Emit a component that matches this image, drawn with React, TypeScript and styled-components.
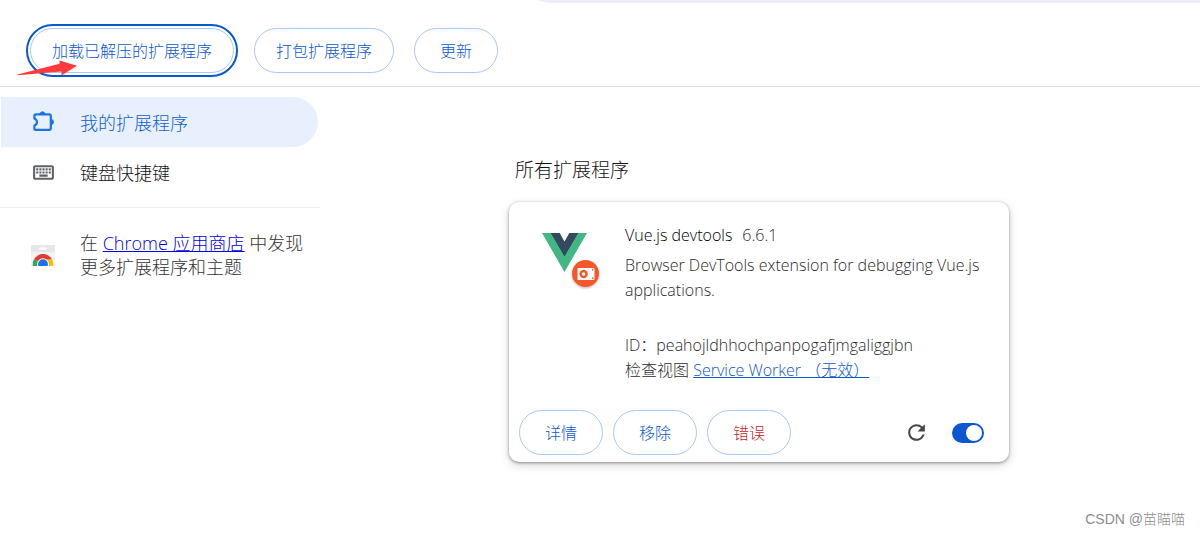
import React from 'react';
import styled, { createGlobalStyle, css } from 'styled-components';
import { MdOutlineKeyboard, MdRefresh } from 'react-icons/md';

const GlobalStyle = createGlobalStyle`
  *, *::before, *::after { box-sizing: border-box; }
  body {
    margin: 0;
    background: #fff;
    color: #111214;
    font-family: "Open Sans", "Noto Sans CJK SC", sans-serif;
    font-weight: 300;
  }
  h1, h2, p { margin: 0; font-weight: inherit; }
  button, input { font: inherit; }
`;

const Page = styled.div`
  display: flex;
  flex-direction: column;
  min-height: 100vh;
`;

const TopBar = styled.header`
  display: flex;
  align-items: flex-end;
  height: 3px;
  padding-left: 522px;
  overflow: hidden;
`;

const SearchField = styled.input`
  flex: 1;
  min-width: 0;
  height: 56px;
  border: 0;
  border-radius: 28px 0 0 28px;
  background: #e9eef8;
`;

const Toolbar = styled.div`
  display: flex;
  gap: 20px;
  padding: 25px 30px 13px;
  border-bottom: 1px solid #dadce0;
`;

const PillButton = styled.button<{ $tone?: string; $focused?: boolean }>`
  position: relative;
  min-width: 84px;
  height: 45px;
  padding: 0 21px;
  border: 1px solid #a8c7fa;
  border-radius: 23px;
  background: #fff;
  color: ${({ $tone }) => $tone ?? '#0b57d0'};
  font-size: 16px;
  line-height: 24px;
  white-space: nowrap;
  cursor: pointer;
  ${({ $focused }) =>
    $focused &&
    css`
      outline: 2px solid #0b57d0;
      outline-offset: 2px;
    `}
`;

const Pointer = styled.svg`
  position: absolute;
  left: -16px;
  top: 28px;
  width: 64px;
  height: 20px;
  pointer-events: none;
`;

const Body = styled.div`
  display: flex;
  align-items: flex-start;
`;

const Sidebar = styled.aside`
  flex: 0 0 320px;
  padding-top: 10px;
  font-size: 18px;
`;

const NavItem = styled.a<{ $active?: boolean }>`
  display: flex;
  align-items: center;
  gap: 24px;
  height: 50px;
  margin: 0 2px 0 1px;
  padding-left: 30px;
  border-radius: 0 25px 25px 0;
  background: ${({ $active }) => ($active ? '#e8f0fe' : 'transparent')};
  color: ${({ $active }) => ($active ? '#0f5fd0' : '#111214')};
  text-decoration: none;

  svg {
    flex: none;
    color: ${({ $active }) => ($active ? '#1a73e8' : '#5f6368')};
  }
`;

const StoreNote = styled.div`
  display: flex;
  align-items: center;
  gap: 25px;
  margin-top: 10px;
  padding: 23px 10px 24px 31px;
  border-top: 1px solid #ededee;
  color: #333;
  line-height: 24px;

  a { color: #0000ee; }
  svg { flex: none; }
`;

const Main = styled.main`
  flex: 1;
  display: flex;
  justify-content: center;
  padding: 69px 22px 40px 20px;
`;

const Column = styled.section`
  width: 100%;
  max-width: 500px;
`;

const Heading = styled.h1`
  padding-left: 6px;
  margin-bottom: 18px;
  font-size: 19px;
  line-height: 28px;
`;

const Card = styled.article`
  border-radius: 10px;
  background: #fff;
  box-shadow: 0 1px 3px rgba(60, 64, 67, 0.5), 0 3px 10px rgba(60, 64, 67, 0.22);
`;

const CardBody = styled.div`
  display: flex;
  gap: 24px;
  padding: 21px 20px 27px 32px;
`;

const Details = styled.div`
  flex: 1;
  min-width: 0;
  color: #2b2b2b;
  font-size: 16px;
  line-height: 25px;

  a { color: #0b57d0; }
`;

const TitleRow = styled.div`
  display: flex;
  gap: 10px;
  margin-bottom: 5px;

  h2 { color: #000; font-size: 16px; }
`;

const Description = styled.p`
  margin-bottom: 30px;
`;

const CardActions = styled.div`
  display: flex;
  align-items: center;
  gap: 10px;
  padding: 0 25px 7px 10px;
`;

const IconButton = styled.button`
  display: flex;
  margin: 0 13px 0 auto;
  padding: 0;
  border: 0;
  background: none;
  color: #474747;
  cursor: pointer;
`;

const Toggle = styled.input`
  display: flex;
  align-items: center;
  width: 32px;
  height: 20px;
  margin: 0;
  padding: 0 2px;
  border-radius: 10px;
  background: #c4c7c5;
  appearance: none;
  cursor: pointer;

  &::before {
    content: '';
    width: 16px;
    height: 16px;
    border-radius: 50%;
    background: #fff;
  }
  &:checked {
    justify-content: flex-end;
    background: #0b57d0;
  }
`;

const Credit = styled.footer`
  margin-top: auto;
  padding: 0 15px 5px;
  color: #8d8d8d;
  font-family: "Liberation Sans", "Noto Sans CJK SC", sans-serif;
  font-size: 14px;
  line-height: 22px;
  text-align: right;
`;

const PuzzleIcon = () => (
  <svg width="25" height="25" viewBox="0 0 25 25" aria-hidden="true">
    <path
      d="M4.8 4.3H18.2Q19.8 4.3 19.8 5.9V18.2Q19.8 19.8 18.2 19.8H4.8Q3.4 19.8 3.4 18.4V15.6Q6 14.4 6 12Q6 9.6 3.4 8.4V5.8Q3.4 4.3 4.8 4.3Z"
      fill="none"
      stroke="currentColor"
      strokeWidth="2.2"
      strokeLinejoin="round"
    />
    <path d="M8.3 4Q9.4 1.2 11.5 1.2Q13.6 1.2 14.7 4ZM20 8.6Q23 9.8 23 12Q23 14.2 20 15.4Z" fill="currentColor" />
  </svg>
);

const StoreIcon = () => (
  <svg width="24" height="21" viewBox="0 0 24 21" aria-hidden="true">
    <path d="M0 0H24V21H0Z" fill="#f1f3f4" />
    <path d="M0 0H24V7H0Z" fill="#e4e6e9" />
    <rect x="8" y="2.6" width="8" height="2.2" rx="1.1" fill="#fff" />
    <path d="M12 19.5L3 14.3A10.4 10.4 0 0 1 21 14.3Z" fill="#e33b2e" />
    <path d="M12 19.5L3 14.3A10.4 10.4 0 0 0 1.7 21H12Z" fill="#34a853" />
    <path d="M12 19.5L16 14.3H21A10.4 10.4 0 0 1 22.3 21H12Z" fill="#fbbc04" />
    <circle cx="12" cy="19.2" r="5.9" fill="#fff" />
    <circle cx="12" cy="19.2" r="4.9" fill="#1a73e8" />
  </svg>
);

const VueIcon = () => (
  <svg width="60" height="68" viewBox="0 0 60 68" role="img" aria-label="Vue.js devtools">
    <defs>
      <filter id="badge-shadow" x="-30%" y="-30%" width="160%" height="170%">
        <feDropShadow dx="0" dy="1" stdDeviation="1.2" floodColor="#000" floodOpacity="0.3" />
      </filter>
    </defs>
    <path d="M1 10H46L23.5 49Z" fill="#41b883" />
    <path d="M9.8 10H18.6L23.5 18.4L28.4 10H37.2L23.5 33.6Z" fill="#35495e" />
    <path d="M18.6 9.5H28.4L23.5 18.4Z" fill="#fff" />
    <circle cx="44.5" cy="50.5" r="13.5" fill="#f4592b" filter="url(#badge-shadow)" />
    <rect x="36.5" y="45" width="17" height="12" rx="1" fill="#fff" />
    <circle cx="42.6" cy="51" r="4.2" fill="#f4592b" />
    <circle cx="42.6" cy="51" r="1.7" fill="#fff" />
    <circle cx="51.7" cy="46.8" r="0.9" fill="#f4592b" />
    <circle cx="51.7" cy="55.2" r="0.9" fill="#f4592b" />
  </svg>
);

export default function App() {
  return (
    <Page>
      <GlobalStyle />
      <TopBar>
        <SearchField type="search" aria-label="搜索扩展程序" />
      </TopBar>
      <Toolbar>
        <PillButton type="button" $focused>
          加载已解压的扩展程序
          <Pointer viewBox="0 0 64 20" aria-hidden="true">
            <path d="M2.5 17.5L44.5 6.8V3.5L62 8.8L46.5 18.5V14.5L2.5 18.3Z" fill="#ff3b3b" />
          </Pointer>
        </PillButton>
        <PillButton type="button">打包扩展程序</PillButton>
        <PillButton type="button">更新</PillButton>
      </Toolbar>
      <Body>
        <Sidebar>
          <nav>
            <NavItem href="#extensions" $active>
              <PuzzleIcon />
              我的扩展程序
            </NavItem>
            <NavItem href="#shortcuts">
              <MdOutlineKeyboard size={25} />
              键盘快捷键
            </NavItem>
          </nav>
          <StoreNote>
            <StoreIcon />
            <p>
              在 <a href="#store">Chrome 应用商店</a> 中发现
              <br />
              更多扩展程序和主题
            </p>
          </StoreNote>
        </Sidebar>
        <Main>
          <Column>
            <Heading>所有扩展程序</Heading>
            <Card>
              <CardBody>
                <VueIcon />
                <Details>
                  <TitleRow>
                    <h2>Vue.js devtools</h2>
                    <span>6.6.1</span>
                  </TitleRow>
                  <Description>
                    Browser DevTools extension for debugging Vue.js applications.
                  </Description>
                  <p>ID：peahojldhhochpanpogafjmgaliggjbn</p>
                  <p>
                    检查视图 <a href="#worker">Service Worker （无效）</a>
                  </p>
                </Details>
              </CardBody>
              <CardActions>
                <PillButton type="button">详情</PillButton>
                <PillButton type="button">移除</PillButton>
                <PillButton type="button" $tone="#c5221f">错误</PillButton>
                <IconButton type="button" aria-label="重新加载">
                  <MdRefresh size={25} />
                </IconButton>
                <Toggle type="checkbox" aria-label="启用 Vue.js devtools" defaultChecked />
              </CardActions>
            </Card>
          </Column>
        </Main>
      </Body>
      <Credit>CSDN @苗瞄喵</Credit>
    </Page>
  );
}
